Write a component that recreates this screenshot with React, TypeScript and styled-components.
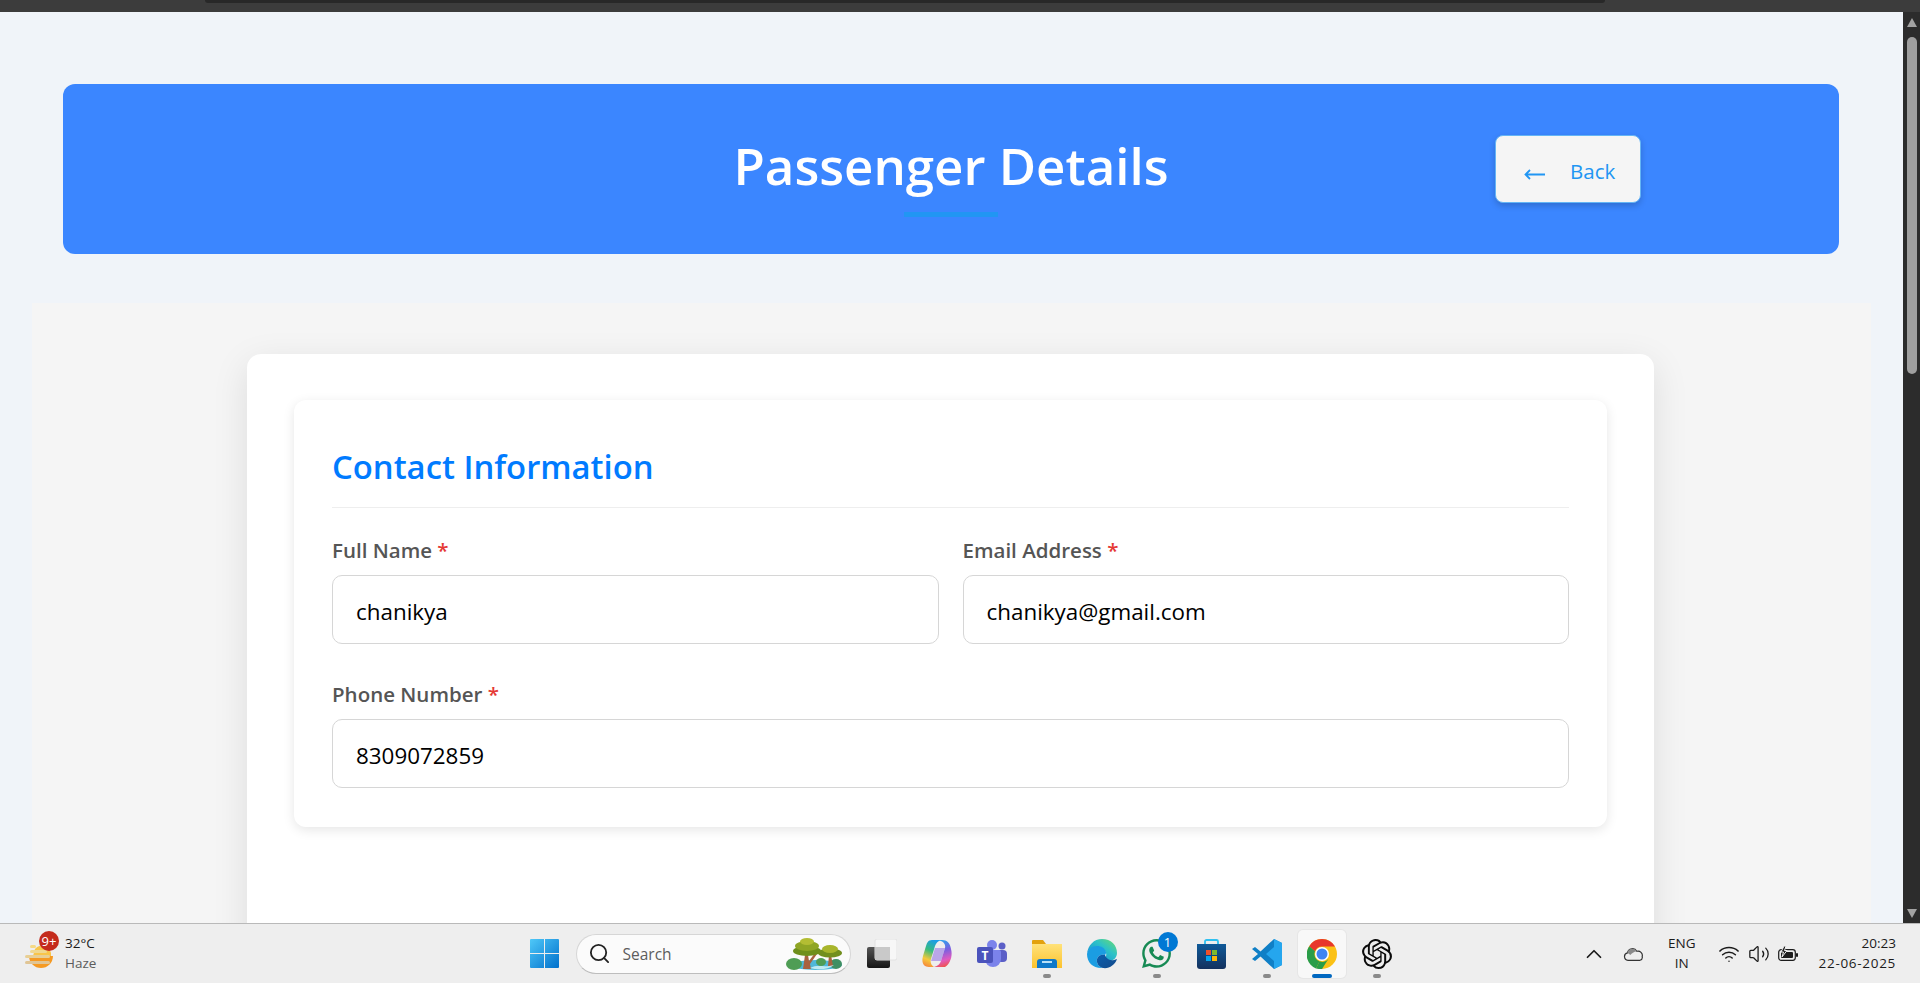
import styled, { createGlobalStyle } from "styled-components";
import { SiOpenai } from "react-icons/si";
import { FaWhatsapp } from "react-icons/fa";
import { ChevronUp, Search, Volume2, Wifi } from "lucide-react";

const GlobalStyle = createGlobalStyle`
  html, body {
    margin: 0;
    height: 100%;
    overflow: hidden;
  }
  body {
    font-family: "Open Sans", "Noto Sans", sans-serif;
  }
  * {
    box-sizing: border-box;
  }
`;

const Screen = styled.div`
  width: 1920px;
  height: 983px;
  display: flex;
  flex-direction: column;
  overflow: hidden;
`;

const BrowserEdge = styled.div`
  height: 12px;
  flex-shrink: 0;
  background: #3c3c3c;
  padding: 0 315px 0 205px;
`;

const BrowserTab = styled.div`
  height: 3px;
  background: #282828;
  border-radius: 0 0 6px 6px;
`;

const Viewport = styled.div`
  flex: 1;
  min-height: 0;
  display: flex;
`;

const Page = styled.div`
  flex: 1;
  min-width: 0;
  overflow: hidden;
  background: #f0f4f9;
  padding: 72px 32px 0;
`;

const ScrollTrack = styled.div`
  width: 17px;
  flex-shrink: 0;
  background: #2c2c2c;
  display: flex;
  flex-direction: column;
  align-items: center;
  padding: 6px 0 5px;
`;

const ScrollArrow = styled.div<{ $down?: boolean }>`
  width: 0;
  height: 0;
  border-left: 5px solid transparent;
  border-right: 5px solid transparent;
  ${(p) => (p.$down ? "border-top" : "border-bottom")}: 9px solid #a3a3a3;
  ${(p) => (p.$down ? "margin-top: auto;" : "")}
`;

const ScrollThumb = styled.div`
  width: 10px;
  height: 337px;
  margin-top: 10px;
  border-radius: 5px;
  background: #9f9f9f;
`;

const Header = styled.header`
  height: 170px;
  margin: 0 32px 49px 31px;
  padding: 0 198px;
  border-radius: 12px;
  background: #3b86ff;
  display: grid;
  grid-template-columns: 1fr auto 1fr;
  align-items: center;
`;

const Title = styled.h1`
  grid-column: 2;
  position: relative;
  margin: 0 0 8px;
  color: #fff;
  font-size: 51px;
  font-weight: 600;
  line-height: 66px;
  white-space: nowrap;

  &::after {
    content: "";
    position: absolute;
    left: 50%;
    bottom: -19px;
    width: 94px;
    height: 5px;
    margin-left: -47px;
    background: #2196f3;
  }
`;

const BackButton = styled.button`
  grid-column: 3;
  justify-self: end;
  width: 146px;
  height: 68px;
  padding: 3px 0 0 28px;
  display: flex;
  align-items: center;
  gap: 25px;
  border: 1px solid #63b5f6;
  border-radius: 8px;
  background: #f5f5f5;
  color: #2196f3;
  font-family: inherit;
  font-size: 20.5px;
  font-weight: 500;
  box-shadow: 0 3px 6px rgba(0, 0, 0, 0.18);
`;

const Main = styled.main`
  background: #f5f5f5;
  padding: 51px 217px 60px 215px;
`;

const Card = styled.div`
  min-height: 720px;
  padding: 46px 47px 48px 47px;
  border-radius: 14px;
  background: #fff;
  box-shadow: 0 10px 36px rgba(0, 0, 0, 0.1);
`;

const Section = styled.section`
  padding: 39px 38px 39px;
  border-radius: 12px;
  background: #fff;
  box-shadow: 0 3px 12px rgba(0, 0, 0, 0.1);
`;

const SectionTitle = styled.h2`
  margin: 0 0 28px;
  padding-bottom: 13px;
  border-bottom: 1px solid #eeeeee;
  color: #007bff;
  font-size: 32.8px;
  font-weight: 600;
  line-height: 55px;
  height: 69px;
`;

const FieldGrid = styled.div`
  display: grid;
  grid-template-columns: 1fr 1fr;
  gap: 36px 24px;
`;

const Field = styled.div<{ $wide?: boolean }>`
  display: flex;
  flex-direction: column;
  gap: 11px;
  ${(p) => (p.$wide ? "grid-column: 1 / -1;" : "")}
`;

const Label = styled.label`
  color: #555;
  font-size: 20.5px;
  font-weight: 600;
  line-height: 28px;
`;

const Required = styled.span`
  color: #e53935;
`;

const Input = styled.input`
  width: 100%;
  height: 69px;
  padding: 3px 23px 0;
  border: 1px solid #d6d6d6;
  border-radius: 10px;
  outline: none;
  background: #fff;
  color: #000;
  font-family: inherit;
  font-size: 22.4px;
`;

const Taskbar = styled.footer`
  height: 60px;
  flex-shrink: 0;
  display: grid;
  grid-template-columns: 1fr auto 1fr;
  align-items: center;
  border-top: 1px solid #b9b9b9;
  background: #eeeeee;
  padding: 0 24px 0 25px;
  font-size: 13.5px;
  color: #1b1b1b;
`;

const WeatherArea = styled.div`
  display: flex;
  align-items: center;
  gap: 9px;
`;

const WeatherIcon = styled.div`
  position: relative;
  width: 31px;
  height: 34px;
  display: flex;
  align-items: flex-end;
`;

const CountBadge = styled.span<{ $color: string; $top: number; $right: number }>`
  position: absolute;
  top: ${(p) => p.$top}px;
  right: ${(p) => p.$right}px;
  width: 20px;
  height: 20px;
  border-radius: 50%;
  background: ${(p) => p.$color};
  color: #fff;
  font-size: 13px;
  line-height: 20px;
  text-align: center;
`;

const TwoLines = styled.div<{ $align?: string }>`
  display: flex;
  flex-direction: column;
  gap: 1px;
  line-height: 19px;
  text-align: ${(p) => p.$align ?? "left"};
  white-space: nowrap;
`;

const Muted = styled.span`
  color: #5c5c5c;
`;

const DateText = styled.span`
  letter-spacing: 0.7px;
`;

const CenterIcons = styled.div`
  display: flex;
  align-items: center;
  gap: 7px;
`;

const SearchBox = styled.div`
  width: 275px;
  height: 40px;
  padding: 0 8px 0 11px;
  display: flex;
  align-items: center;
  gap: 12px;
  border: 1px solid #d6d6d6;
  border-bottom-color: #bdbdbd;
  border-radius: 20px;
  background: #fbfbfb;
  color: #5d5d5d;
  font-size: 15.5px;
`;

const SearchText = styled.span`
  flex: 1;
`;

const TaskSlot = styled.div<{ $state?: "running" | "active" }>`
  position: relative;
  width: 48px;
  height: 48px;
  display: flex;
  align-items: center;
  justify-content: center;
  border-radius: 5px;
  background: ${(p) => (p.$state === "active" ? "#f8f8f8" : "transparent")};
  box-shadow: ${(p) =>
    p.$state === "active" ? "0 0 0 1px #e6e6e6" : "none"};

  &::after {
    content: ${(p) => (p.$state ? '""' : "none")};
    position: absolute;
    bottom: 0;
    left: 50%;
    width: ${(p) => (p.$state === "active" ? "20px" : "8px")};
    height: 4px;
    transform: translateX(-50%);
    border-radius: 2px;
    background: ${(p) => (p.$state === "active" ? "#0067c0" : "#8a8a8a")};
  }
`;

const Tray = styled.div`
  justify-self: end;
  display: flex;
  align-items: center;
`;

const TrayIcon = styled.div<{ $gap: number }>`
  display: flex;
  align-items: center;
  margin-right: ${(p) => p.$gap}px;
`;

function WindowsLogo() {
  return (
    <svg width="29" height="29" viewBox="0 0 29 29">
      <defs>
        <linearGradient id="win" x1="0" y1="0" x2="1" y2="1">
          <stop offset="0" stopColor="#4fc8f8" />
          <stop offset="1" stopColor="#0070cc" />
        </linearGradient>
      </defs>
      <path
        fill="url(#win)"
        d="M1 0h13v14H0V1a1 1 0 0 1 1-1zM15 0h13a1 1 0 0 1 1 1v13H15zM0 15h14v14H1a1 1 0 0 1-1-1zM15 15h14v13a1 1 0 0 1-1 1H15z"
      />
    </svg>
  );
}

function WeatherGlyph() {
  return (
    <svg width="31" height="28" viewBox="0 0 31 28">
      <path d="M4 13h24a12 12 0 0 1-24 0z" fill="#f59a23" />
      <path d="M10 6a9 9 0 0 1 16 7H8z" fill="#f8c54a" />
      <rect x="5" y="2" width="6" height="3" rx="1.5" fill="#f5d985" />
      <rect x="5" y="7" width="17" height="3" rx="1.5" fill="#f0d890" />
      <rect x="0" y="12" width="25" height="3" rx="1.5" fill="#e8cf95" />
      <rect x="0" y="18" width="25" height="3" rx="1.5" fill="#e0c595" />
    </svg>
  );
}

function Landscape() {
  return (
    <svg width="56" height="32" viewBox="0 0 56 32">
      <ellipse cx="30" cy="27" rx="26" ry="5" fill="#4fb7d9" />
      <ellipse cx="8" cy="26" rx="8" ry="6" fill="#4f9d55" />
      <ellipse cx="50" cy="26" rx="6" ry="5" fill="#3f8f63" />
      <path d="M17 31l2-14h3l1 6 6-8 2 1-7 10 1 5z" fill="#a8623f" />
      <ellipse cx="21" cy="13" rx="14" ry="5" fill="#6f8f1c" />
      <ellipse cx="21" cy="8" rx="12" ry="5" fill="#8fa524" />
      <ellipse cx="21" cy="3.500" rx="7" ry="3.500" fill="#b3bd33" />
      <path d="M42 28l1-11h2l2 11z" fill="#a8623f" />
      <ellipse cx="44" cy="15" rx="12" ry="4.500" fill="#728f1e" />
      <ellipse cx="44" cy="11" rx="8" ry="4" fill="#a8b52c" />
      <ellipse cx="35" cy="24" rx="5" ry="4" fill="#4f9d55" />
      <path d="M24 30c8-4 14 0 24-3-6 5-16 5-24 3z" fill="#bfe9f2" />
    </svg>
  );
}

function TaskView() {
  return (
    <svg width="30" height="29" viewBox="0 0 30 29">
      <defs>
        <linearGradient id="tvDark" x1="0" y1="0" x2="0" y2="1">
          <stop offset="0" stopColor="#555" />
          <stop offset="1" stopColor="#151515" />
        </linearGradient>
      </defs>
      <rect x="0" y="8" width="23" height="21" rx="2" fill="url(#tvDark)" />
      <rect x="8" y="0" width="22" height="21" rx="2" fill="#f7f7f7" stroke="#e2e2e2" />
      <rect x="8" y="8" width="15" height="13" fill="#c9c9c9" />
    </svg>
  );
}

function Copilot() {
  return (
    <svg width="30" height="28" viewBox="0 0 30 28">
      <defs>
        <linearGradient id="copL" x1="0.6" y1="0" x2="0.3" y2="1">
          <stop offset="0" stopColor="#1b9de8" />
          <stop offset="0.4" stopColor="#36bb7e" />
          <stop offset="0.75" stopColor="#f5c93c" />
          <stop offset="1" stopColor="#f58a3a" />
        </linearGradient>
        <linearGradient id="copR" x1="0.4" y1="0" x2="0.6" y2="1">
          <stop offset="0" stopColor="#2aa5ee" />
          <stop offset="0.4" stopColor="#7a5fe0" />
          <stop offset="0.75" stopColor="#e05ac0" />
          <stop offset="1" stopColor="#f0534a" />
        </linearGradient>
      </defs>
      <path d="M13 8h10l-4 13H9z" fill="#b9a6e8" />
      <path
        d="M14 0h-4C6 0 5 3 4 6L1 16c-2 7 1 11 6 11h5c-3-2-4-5-3-8l4-13c1-3 3-5 6-6z"
        fill="url(#copL)"
      />
      <path
        d="M16 0h4c5 0 8 3 9 9 2 7-1 15-6 18H12c4-1 6-3 7-6l4-13c1-4-2-7-7-8z"
        fill="url(#copR)"
      />
    </svg>
  );
}

function Teams() {
  return (
    <svg width="30" height="27" viewBox="0 0 30 27">
      <circle cx="25" cy="6" r="3.5" fill="#5b5fc7" />
      <rect x="19" y="10" width="11" height="12" rx="4" fill="#5b5fc7" />
      <circle cx="15" cy="5" r="5" fill="#7b83eb" />
      <path d="M8 10h14a2 2 0 0 1 2 2v7a8 8 0 0 1-16 0z" fill="#7b83eb" />
      <rect x="0" y="7" width="16" height="16" rx="2" fill="#4b53bc" />
      <text
        x="8"
        y="19.5"
        fill="#fff"
        fontSize="12"
        fontWeight="700"
        textAnchor="middle"
        fontFamily="Open Sans, sans-serif"
      >
        T
      </text>
    </svg>
  );
}

function Explorer() {
  return (
    <svg width="30" height="28" viewBox="0 0 30 28">
      <defs>
        <linearGradient id="folder" x1="0" y1="0" x2="0" y2="1">
          <stop offset="0" stopColor="#ffe27a" />
          <stop offset="1" stopColor="#fcc22d" />
        </linearGradient>
      </defs>
      <path d="M1 0h10l3 4h16v5H0V1a1 1 0 0 1 1-1z" fill="#e3a20e" />
      <path d="M0 4h30v24H0z" fill="url(#folder)" />
      <path d="M5 22a3 3 0 0 1 3-3h14a3 3 0 0 1 3 3v6H5z" fill="#0f78c9" />
      <rect x="10" y="21" width="10" height="2" fill="#b8e0f7" />
    </svg>
  );
}

function Edge() {
  return (
    <svg width="30" height="30" viewBox="0 0 30 30">
      <defs>
        <linearGradient id="edgeTop" x1="0" y1="1" x2="1" y2="0">
          <stop offset="0" stopColor="#1183d8" />
          <stop offset="0.6" stopColor="#2cc2c8" />
          <stop offset="1" stopColor="#6fdc6a" />
        </linearGradient>
        <linearGradient id="edgeLow" x1="0" y1="0" x2="1" y2="1">
          <stop offset="0" stopColor="#0b5fae" />
          <stop offset="1" stopColor="#134a8a" />
        </linearGradient>
      </defs>
      <path
        d="M15 0c9 0 15 6 15 14 0 5-4 8-8 8-3 0-5-1-5-2 1-1 3-3 2-6-1-4-5-6-9-6-5 0-9 3-10 7C1 6 7 0 15 0z"
        fill="url(#edgeTop)"
      />
      <path
        d="M0 15c1-5 5-8 10-8 4 0 8 2 9 6 0 1 0 2-1 3-3-1-7 0-8 4-1 4 2 8 6 9C7 30 0 24 0 15z"
        fill="#1b9de2"
      />
      <path
        d="M10 20c1-4 5-5 8-4 1 3 4 6 9 5 1 0 2-1 3-1-2 6-8 10-14 9-4-1-7-5-6-9z"
        fill="url(#edgeLow)"
      />
    </svg>
  );
}

function Store() {
  return (
    <svg width="29" height="30" viewBox="0 0 29 30">
      <defs>
        <linearGradient id="storeBag" x1="0" y1="0" x2="0" y2="1">
          <stop offset="0" stopColor="#0f5a99" />
          <stop offset="1" stopColor="#13315e" />
        </linearGradient>
      </defs>
      <path
        d="M8 5V2.500A1.500 1.500 0 0 1 9.500 1h10A1.500 1.500 0 0 1 21 2.500V5"
        fill="none"
        stroke="#2fc0f0"
        strokeWidth="1.8"
      />
      <path d="M0 5h29v22a3 3 0 0 1-3 3H3a3 3 0 0 1-3-3z" fill="url(#storeBag)" />
      <rect x="9" y="11" width="5" height="5" fill="#f0512b" />
      <rect x="15" y="11" width="5" height="5" fill="#7fba2e" />
      <rect x="9" y="17" width="5" height="5" fill="#05a6ef" />
      <rect x="15" y="17" width="5" height="5" fill="#fdb809" />
    </svg>
  );
}

function VsCode() {
  return (
    <svg width="30" height="30" viewBox="0 0 30 30">
      <path
        d="M22 0l8 4v22l-8 4L8.500 17.500 3 22l-3-2 6-5-6-5 3-2 5.500 4.500z"
        fill="#0f7fc6"
      />
      <path d="M22 0l8 4v22l-8 4zM22 8l-8 7 8 7z" fill="#25a6ee" fillRule="evenodd" />
    </svg>
  );
}

function Chrome() {
  return (
    <svg width="30" height="30" viewBox="0 0 30 30">
      <circle cx="15" cy="15" r="15" fill="#fbc116" />
      <path d="M15 0a15 15 0 0 1 13 7.500H15a7.500 7.500 0 0 0-7 4.700L2.200 7.200A15 15 0 0 1 15 0z" fill="#e8372c" />
      <path d="M2.200 7.200L8 12.200a7.500 7.500 0 0 0 4.500 10L9 29.400A15 15 0 0 1 2.200 7.200z" fill="#2a9d49" />
      <path d="M9 29.400l3.500-7.200a7.500 7.500 0 0 0 9-2.500L15 30a15 15 0 0 1-6-.6z" fill="#2a9d49" />
      <circle cx="15" cy="15" r="7" fill="#fff" />
      <circle cx="15" cy="15" r="5.500" fill="#3f84f2" />
    </svg>
  );
}

function OneDrive() {
  return (
    <svg width="20" height="14" viewBox="0 0 20 14">
      <path
        d="M5 13.300a3.800 3.800 0 0 1-.5-7.500 5 5 0 0 1 9.300-1.500 4.300 4.300 0 0 1 5.400 5.200 3.200 3.200 0 0 1-2.200 3.800z"
        fill="#eeeeee"
        stroke="#333"
        strokeWidth="1.200"
      />
      <path d="M4.500 6a5 5 0 0 1 9.300-1.700c-3 .5-5 2-6.500 3.700-1-1-2-1.600-2.800-2z" fill="#8a8a8a" />
    </svg>
  );
}

function BatteryCharging() {
  return (
    <svg width="20" height="16" viewBox="0 0 20 16">
      <rect x="0.700" y="3.700" width="16.600" height="10.600" rx="2.500" fill="#eeeeee" stroke="#1c1c1c" strokeWidth="1.200" />
      <rect x="3" y="6" width="12" height="6" rx="1" fill="#1c1c1c" />
      <rect x="18" y="7" width="2" height="4" rx="1" fill="#1c1c1c" />
      <path d="M6 0L3 6h2.500L4 11l5-6.500H6.500L8 0z" fill="#1c1c1c" stroke="#eeeeee" strokeWidth="1" />
    </svg>
  );
}

function BackArrow() {
  return (
    <svg width="21" height="11" viewBox="0 0 21 11" style={{ marginTop: 8 }}>
      <path
        d="M21 5.500H1.500M6 1L1.500 5.500 6 10"
        fill="none"
        stroke="#2196f3"
        strokeWidth="1.800"
      />
    </svg>
  );
}

export default function App() {
  return (
    <Screen>
      <GlobalStyle />
      <BrowserEdge>
        <BrowserTab />
      </BrowserEdge>
      <Viewport>
        <Page>
          <Header>
            <Title>Passenger Details</Title>
            <BackButton>
              <BackArrow />
              Back
            </BackButton>
          </Header>
          <Main>
            <Card>
              <Section>
                <SectionTitle>Contact Information</SectionTitle>
                <FieldGrid>
                  <Field>
                    <Label>
                      Full Name <Required>*</Required>
                    </Label>
                    <Input defaultValue="chanikya" />
                  </Field>
                  <Field>
                    <Label>
                      Email Address <Required>*</Required>
                    </Label>
                    <Input defaultValue="chanikya@gmail.com" />
                  </Field>
                  <Field $wide>
                    <Label>
                      Phone Number <Required>*</Required>
                    </Label>
                    <Input defaultValue="8309072859" />
                  </Field>
                </FieldGrid>
              </Section>
            </Card>
          </Main>
        </Page>
        <ScrollTrack>
          <ScrollArrow />
          <ScrollThumb />
          <ScrollArrow $down />
        </ScrollTrack>
      </Viewport>
      <Taskbar>
        <WeatherArea>
          <WeatherIcon>
            <WeatherGlyph />
            <CountBadge $color="#c42b1c" $top={-6} $right={-3}>
              9+
            </CountBadge>
          </WeatherIcon>
          <TwoLines>
            <span>32°C</span>
            <Muted>Haze</Muted>
          </TwoLines>
        </WeatherArea>
        <CenterIcons>
          <TaskSlot>
            <WindowsLogo />
          </TaskSlot>
          <SearchBox>
            <Search size={23} strokeWidth={1.9} color="#222" />
            <SearchText>Search</SearchText>
            <Landscape />
          </SearchBox>
          <TaskSlot>
            <TaskView />
          </TaskSlot>
          <TaskSlot>
            <Copilot />
          </TaskSlot>
          <TaskSlot>
            <Teams />
          </TaskSlot>
          <TaskSlot $state="running">
            <Explorer />
          </TaskSlot>
          <TaskSlot>
            <Edge />
          </TaskSlot>
          <TaskSlot $state="running">
            <FaWhatsapp size={33} color="#178a54" />
            <CountBadge $color="#0078d4" $top={2} $right={3}>
              1
            </CountBadge>
          </TaskSlot>
          <TaskSlot>
            <Store />
          </TaskSlot>
          <TaskSlot $state="running">
            <VsCode />
          </TaskSlot>
          <TaskSlot $state="active">
            <Chrome />
          </TaskSlot>
          <TaskSlot $state="running">
            <SiOpenai size={30} color="#0b0b0b" />
          </TaskSlot>
        </CenterIcons>
        <Tray>
          <TrayIcon $gap={16}>
            <ChevronUp size={26} strokeWidth={1.6} />
          </TrayIcon>
          <TrayIcon $gap={25}>
            <OneDrive />
          </TrayIcon>
          <TrayIcon $gap={22}>
            <TwoLines $align="center">
              <span>ENG</span>
              <span>IN</span>
            </TwoLines>
          </TrayIcon>
          <TrayIcon $gap={8}>
            <Wifi size={22} strokeWidth={1.6} />
          </TrayIcon>
          <TrayIcon $gap={8}>
            <Volume2 size={22} strokeWidth={1.4} />
          </TrayIcon>
          <TrayIcon $gap={21}>
            <BatteryCharging />
          </TrayIcon>
          <TwoLines $align="right">
            <span>20:23</span>
            <DateText>22-06-2025</DateText>
          </TwoLines>
        </Tray>
      </Taskbar>
    </Screen>
  );
}
